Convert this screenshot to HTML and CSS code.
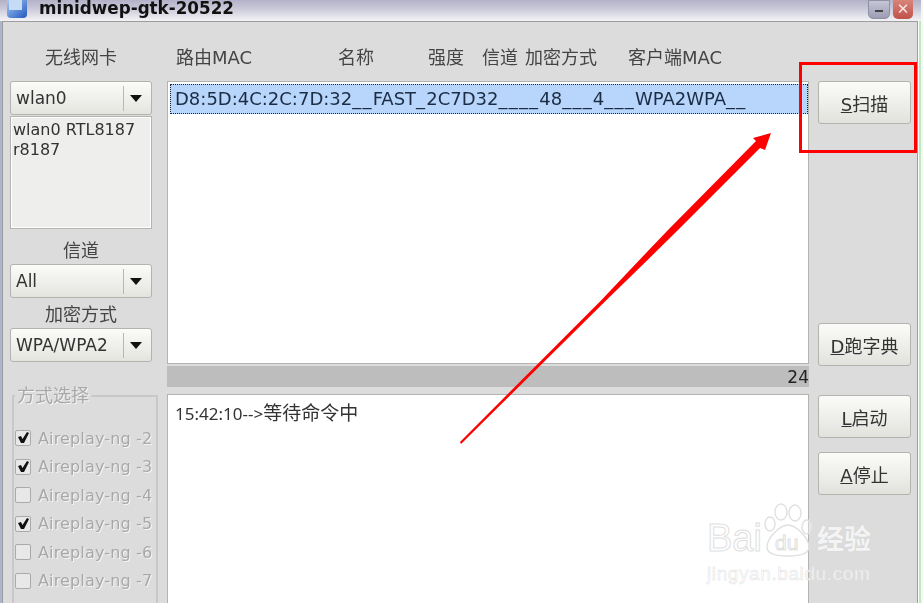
FILE: index.html
```html
<!DOCTYPE html>
<html lang="zh-CN">
<head>
    <meta charset="UTF-8">
    <title>minidwep-gtk-20522</title>
    <link rel="stylesheet" href="styles.css">
</head>
<body>
    <div class="titlebar">
        <svg class="app-icon" viewBox="0 0 20 18" width="20" height="18">
            <defs>
                <linearGradient id="cube" x1="0" y1="0" x2="1" y2="1">
                    <stop offset="0" stop-color="#a9cbf2"/>
                    <stop offset="1" stop-color="#1f57c0"/>
                </linearGradient>
            </defs>
            <path d="M0 0h20v14q0 4-4 4H4q-4 0-4-4z" fill="url(#cube)"/>
            <path d="M2 0h13v10H2z" fill="#c6dcf6"/>
        </svg>
        <span class="title">minidwep-gtk-20522</span>
        <div class="winbtns">
            <span class="winbtn min"><span class="min-bar"></span></span>
            <span class="winbtn close">✕</span>
        </div>
    </div>

    <div class="window">
        <div class="left">
            <div class="label first">无线网卡</div>
            <div class="combo"><span class="combo-text">wlan0</span><span class="combo-arrow"></span></div>
            <div class="cardlist">wlan0 RTL8187<br>r8187</div>
            <div class="label mid1">信道</div>
            <div class="combo"><span class="combo-text">All</span><span class="combo-arrow"></span></div>
            <div class="label mid2">加密方式</div>
            <div class="combo"><span class="combo-text">WPA/WPA2</span><span class="combo-arrow"></span></div>
            <fieldset class="modes">
                <legend>方式选择</legend>
                <div class="mode"><span class="check"><svg viewBox="0 0 14 14" width="14" height="14"><path d="M2 6l3-1 1.5 3L11 1l2 1-5 10H5z" fill="#111"/></svg></span>Aireplay-ng -2</div>
                <div class="mode"><span class="check"><svg viewBox="0 0 14 14" width="14" height="14"><path d="M2 6l3-1 1.5 3L11 1l2 1-5 10H5z" fill="#111"/></svg></span>Aireplay-ng -3</div>
                <div class="mode"><span class="check"></span>Aireplay-ng -4</div>
                <div class="mode"><span class="check"><svg viewBox="0 0 14 14" width="14" height="14"><path d="M2 6l3-1 1.5 3L11 1l2 1-5 10H5z" fill="#111"/></svg></span>Aireplay-ng -5</div>
                <div class="mode"><span class="check"></span>Aireplay-ng -6</div>
                <div class="mode"><span class="check"></span>Aireplay-ng -7</div>
            </fieldset>
        </div>

        <div class="center">
            <div class="headers">
                <span>路由MAC</span>
                <span>名称</span>
                <span>强度</span>
                <span>信道</span>
                <span>加密方式</span>
                <span>客户端MAC</span>
            </div>
            <div class="aplist">
                <div class="aprow">D8:5D:4C:2C:7D:32<span class="gap">__</span>FAST<span class="gap">_</span>2C7D32<span class="gap">____</span>48<span class="gap">___</span>4<span class="gap">___</span>WPA2WPA<span class="gap">__</span></div>
            </div>
            <div class="progress">24</div>
            <div class="log"><span class="time">15:42:10--&gt;</span>等待命令中</div>
        </div>

        <div class="right">
            <button class="btn scan"><u>S</u>扫描</button>
            <button class="btn dict"><u>D</u>跑字典</button>
            <button class="btn start"><u>L</u>启动</button>
            <button class="btn stop"><u>A</u>停止</button>
        </div>
    </div>

    <div class="redbox"></div>
    <svg class="arrow" viewBox="0 0 923 603" width="923" height="603">
        <polygon points="460,442 461,444 606.5,300 644.5,263 678,230 760,148 765,150 771,133 753,138 756,141 668,230 636.5,263 601.5,300" fill="#f00"/>
    </svg>

    <div class="watermark">
        <div class="wm-top">
            <span class="wm-bai">Bai</span>
            <svg class="wm-paw" viewBox="0 0 50 54" width="50" height="54">
                <g fill="rgba(255,255,255,.35)" stroke="#e0e0e0" stroke-width="1.4">
                    <ellipse cx="18" cy="9" rx="6" ry="8"/>
                    <ellipse cx="32" cy="10" rx="6" ry="8"/>
                    <ellipse cx="7" cy="21" rx="5" ry="7"/>
                    <ellipse cx="44" cy="24" rx="5" ry="7"/>
                    <path d="M25 22c7 0 21 12 21 22 0 7-9 9-21 9S4 51 4 44c0-10 14-22 21-22z"/>
                </g>
            </svg>
            <span class="wm-du">du</span>
            <span class="wm-jy">经验</span>
        </div>
        <div class="wm-url">jingyan.baidu.com</div>
    </div>
</body>
</html>
```

FILE: styles.css
```css
html, body {
    margin: 0;
    height: 603px;
    overflow: hidden;
}
body {
    position: relative;
    background: linear-gradient(90deg, #aab6cc 0 2px, #fff 2px 919px, #bfe8bf 919px 921px, #f2faf2 921px);
    font-family: "DejaVu Sans", "Noto Sans CJK SC", sans-serif;
    font-size: 16px;
    color: #333;
}
.titlebar {
    height: 21px;
    margin-right: 2px;
    display: flex;
    align-items: center;
    padding-left: 7px;
    background: linear-gradient(#b3b1c8, #c9c8d8 40%, #f4f4f6);
    overflow: hidden;
    filter: blur(0.4px);
}
.app-icon {
    margin-top: -3px;
}
.title {
    margin-left: 12px;
    margin-top: -5px;
    font-size: 16.75px;
    font-weight: bold;
    color: #111;
}
.winbtns {
    margin-left: auto;
    margin-right: 8px;
    margin-top: -3px;
    display: flex;
    gap: 3px;
}
.winbtn {
    width: 22px;
    height: 19px;
    border-radius: 0 0 5px 5px;
    display: flex;
    align-items: center;
    justify-content: center;
}
.min {
    background: linear-gradient(#c6c6d6, #9c9cb4);
    border: 1px solid #9090a4;
    box-sizing: border-box;
}
.min-bar {
    width: 8px;
    height: 2px;
    background: #444;
    margin-top: 4px;
}
.close {
    width: 20px;
    background: linear-gradient(#d98479, #c0524a);
    color: #f6e6e4;
    font-size: 15px;
    font-weight: bold;
}

.window {
    width: 916px;
    margin-left: 2px;
    height: 582px;
    box-sizing: border-box;
    border: 1px solid #9c9c9c;
    border-bottom: 0;
    background: #dcdcdc;
    padding-left: 7px;
    display: grid;
    grid-template-columns: 142px 642px 93px;
    column-gap: 12px;
    filter: blur(0.4px);
}
.left {
    display: flex;
    flex-direction: column;
}
.label {
    text-align: center;
    font-size: 18px;
    line-height: 24px;
    color: #444;
}
.first { margin-top: 24px; margin-bottom: 11px; }
.mid1 { margin-top: 10px; margin-bottom: 1px; }
.mid2 { margin-top: 5px; margin-bottom: 1px; }
.combo {
    height: 34px;
    box-sizing: border-box;
    border: 1px solid #b4b4ae;
    border-radius: 3px;
    background: linear-gradient(#fbfbf9, #e4e4df);
    display: flex;
    align-items: center;
    flex-shrink: 0;
}
.combo-text {
    flex: 1;
    padding-left: 5px;
    font-size: 17px;
    border-right: 1px solid #b8b8b2;
    line-height: 25px;
}
.combo-arrow {
    width: 27px;
    height: 0;
    position: relative;
}
.combo-arrow::after {
    content: "";
    position: absolute;
    left: 6px;
    top: -3px;
    border-left: 6px solid transparent;
    border-right: 6px solid transparent;
    border-top: 7px solid #111;
}
.cardlist {
    height: 113px;
    box-sizing: border-box;
    margin-top: 1px;
    border: 1px solid #b4b4ae;
    background: #eeeeec;
    padding: 3px 2px;
    line-height: 20px;
    font-size: 16px;
    box-shadow: inset 0 0 0 1px #fff;
}
.modes {
    margin: 24px -6px 0 2px;
    padding: 18px 0 0 1px;
    border: 2px solid #c8c8c8;
    border-bottom: 0;
    min-width: 0;
    flex: 1;
    box-sizing: border-box;
}
.modes legend {
    margin-left: 0;
    padding: 0 2px;
    font-size: 18px;
    line-height: 20px;
    color: #a8a8a8;
    text-shadow: 1px 1px 0 #f4f4f4;
}
.mode {
    height: 28.5px;
    display: flex;
    align-items: center;
    gap: 7px;
    font-size: 16px;
    letter-spacing: 0.15px;
    color: #a8a8a8;
    text-shadow: 1px 1px 0 #f4f4f4;
    white-space: nowrap;
}
.check {
    width: 14px;
    height: 14px;
    flex-shrink: 0;
    border: 1px solid #aaa;
    border-radius: 2px;
    background: #e8e8e8;
    display: block;
}
.check svg {
    display: block;
}

.center {
    display: flex;
    flex-direction: column;
    padding-left: 3px;
    margin-right: -3px;
}
.headers {
    height: 59px;
    padding: 23px 0 0 9px;
    box-sizing: border-box;
    display: grid;
    grid-template-columns: 162px 90px 54px 43px 103px auto;
    font-size: 18px;
    line-height: 26px;
    color: #444;
    white-space: nowrap;
}
.aplist {
    height: 283px;
    box-sizing: border-box;
    border: 1px solid #b4b4ae;
    background: #fff;
    padding: 2px 0 2px 2px;
}
.aprow {
    height: 30px;
    box-sizing: border-box;
    border: 1px dotted #223;
    background: #b8d6fb;
    color: #1c2c44;
    line-height: 28px;
    padding-left: 4px;
    font-size: 18px;
    white-space: nowrap;
    overflow: hidden;
}
.gap {
    letter-spacing: 1.2px;
}
.progress {
    height: 21px;
    margin-top: 2px;
    background: #bdbdbd;
    text-align: right;
    line-height: 22px;
    color: #222;
    font-size: 17px;
}
.log {
    flex: 1;
    margin-top: 7px;
    box-sizing: border-box;
    border: 1px solid #b4b4ae;
    border-bottom: 0;
    background: #fff;
    padding: 5px 7px;
    font-size: 19px;
    line-height: 26px;
}
.time {
    font-family: "Noto Sans", sans-serif;
    font-size: 17px;
}

.right {
    display: flex;
    flex-direction: column;
    padding-top: 59px;
}
.btn {
    height: 43px;
    box-sizing: border-box;
    border: 1px solid #b4b4ae;
    border-radius: 3px;
    background: linear-gradient(#fbfbf9, #e2e2dd);
    font-family: inherit;
    font-size: 18px;
    color: #333;
    padding: 0;
}
.dict { margin-top: 199px; }
.start { margin-top: 29px; }
.stop { margin-top: 14px; }

.redbox {
    position: absolute;
    left: 799px;
    top: 62px;
    width: 112px;
    height: 85px;
    border: 3px solid #f00;
}
.arrow {
    position: absolute;
    left: 0;
    top: 0;
}
.watermark {
    position: absolute;
    left: 707px;
    top: 503px;
    color: rgba(255, 255, 255, 0.75);
}
.wm-top {
    display: flex;
    align-items: flex-end;
    height: 54px;
}
.wm-bai, .wm-du {
    font-family: "Liberation Sans", sans-serif;
    font-size: 38px;
    line-height: 38px;
    -webkit-text-stroke: 1px #e0e0e0;
}
.wm-bai {
    width: 56px;
}
.wm-du {
    font-size: 21px;
    line-height: 28px;
    margin-left: -38px;
    width: 38px;
}
.wm-jy {
    margin-left: 4px;
    font-size: 27px;
    line-height: 34px;
    font-weight: bold;
    color: #f4f4f4;
    text-shadow: 0 0 1px #ccc;
}
.wm-url {
    font-family: "Liberation Sans", sans-serif;
    font-size: 19px;
    line-height: 24px;
    margin-top: 5px;
    letter-spacing: 0.6px;
    -webkit-text-stroke: 0.5px #e0e0e0;
}
```
